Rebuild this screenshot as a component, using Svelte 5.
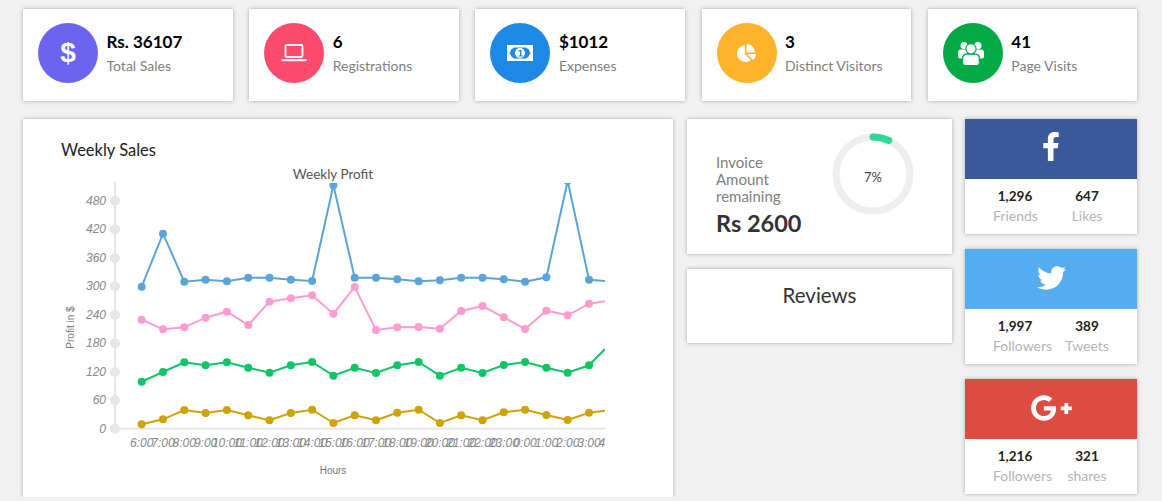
<script>
    const stats = [
        { value: "Rs. 36107", label: "Total Sales", color: "#6c63ef", icon: "dollar" },
        { value: "6", label: "Registrations", color: "#fc4b6c", icon: "laptop" },
        { value: "$1012", label: "Expenses", color: "#1e88e5", icon: "money" },
        { value: "3", label: "Distinct Visitors", color: "#ffb22b", icon: "pie" },
        { value: "41", label: "Page Visits", color: "#03a945", icon: "users" },
    ];

    const socials = [
        { name: "facebook", color: "#3b5998", a: "1,296", aLabel: "Friends", b: "647", bLabel: "Likes" },
        { name: "twitter", color: "#55acee", a: "1,997", aLabel: "Followers", b: "389", bLabel: "Tweets" },
        { name: "google", color: "#dd4c40", a: "1,216", aLabel: "Followers", b: "321", bLabel: "shares" },
    ];

    // chart numbers are pixel rows read off the plot, one per hour
    const firstX = 141.7;
    const stepX = 21.3;
    const endX = 605;
    const series = [
        { color: "#5ba4da", end: 281, ys: [286.7, 233.7, 281.7, 279.7, 281.3, 277.7, 277.7, 279.7, 281, 185.3, 277.7, 277.7, 279.3, 281.3, 280.3, 277.7, 277.7, 279.3, 281.7, 277.3, 181, 279.7] },
        { color: "#ff9ccf", end: 301.3, ys: [319.7, 329.3, 327.3, 317.7, 311.7, 325, 301.7, 298.3, 295.3, 313.7, 287, 330, 327.3, 327, 328.7, 311, 306, 317.3, 329, 310.7, 315.3, 303.7] },
        { color: "#0cc665", end: 349, ys: [381.7, 372, 362.3, 365.3, 362.3, 367.7, 372.7, 365.3, 362, 375.7, 367.7, 373, 365.3, 362, 375.7, 367.7, 373, 365, 362, 367.7, 372.7, 365.3] },
        { color: "#cfa206", end: 410.7, ys: [424.3, 419.3, 410, 413, 410, 415.3, 420.3, 413, 409.7, 423, 415.3, 420.3, 412.7, 409.7, 423, 415.3, 420.3, 412.3, 409.7, 415, 420, 412.7] },
    ];

    const yTicks = [
        [480, 200.7], [420, 229.3], [360, 258], [300, 286.3], [240, 315],
        [180, 343.3], [120, 372], [60, 400.3], [0, 428.7],
    ];

    const hours = [6, 7, 8, 9, 10, 11, 12, 13, 14, 15, 16, 17, 18, 19, 20, 21, 22, 23, 0, 1, 2, 3, 4];

    const xOf = (i) => firstX + i * stepX;
    const line = (s) =>
        s.ys.map((y, i) => `${xOf(i)},${y}`).join(" ") + ` ${endX},${s.end}`;

    // 7% of the ring
    const ringLen = 2 * Math.PI * 37;
</script>

<div class="page">
    <div class="stats">
        {#each stats as s}
            <div class="card stat">
                <div class="bubble" style="background:{s.color}">
                    {#if s.icon === "dollar"}
                        <span class="dollar">$</span>
                    {:else if s.icon === "laptop"}
                        <svg width="26" height="18" viewBox="0 0 26 18">
                            <rect x="4.5" y="1" width="17" height="12" rx="1.5" fill="none" stroke="#fff" stroke-width="1.8" />
                            <path d="M0.5 15h25v1.2a1 1 0 0 1-1 1h-23a1 1 0 0 1-1-1z" fill="#fff" />
                        </svg>
                    {:else if s.icon === "money"}
                        <svg width="26" height="16" viewBox="0 0 26 16">
                            <rect width="26" height="16" fill="#fff" />
                            <path d="M2.5 8Q4.5 3.6 7 2.6H19Q21.5 3.6 23.5 8Q21.5 12.4 19 13.4H7Q4.5 12.4 2.5 8z" fill="#1e88e5" />
                            <circle cx="13" cy="8" r="5" fill="#fff" />
                            <path d="M11.4 5.6l2-.9h1v5.7h1.2v1.1h-4v-1.1h1.4V6.2l-1.4.5z" fill="#1e88e5" />
                        </svg>
                    {:else if s.icon === "pie"}
                        <svg width="19" height="18" viewBox="0 0 544 512">
                            <path fill="#fff" d="M527.79 288H290.5l158.03 158.03c6.04 6.04 15.98 6.53 22.19.68 38.7-36.46 65.32-85.61 73.13-140.86 1.34-9.46-6.51-17.85-16.06-17.85zm-15.83-64.8C503.72 103.74 408.26 8.28 288.8.04 279.68-.59 272 7.1 272 16.24V240h223.77c9.14 0 16.82-7.68 16.19-16.8zM224 288V50.71c0-9.55-8.39-17.4-17.84-16.06C86.99 51.49-4.1 155.6.14 280.37 4.5 408.51 114.83 513.59 243.03 511.98c50.4-.63 96.97-16.87 135.26-44.03 7.9-5.6 8.42-17.23 1.57-24.08L224 288z" />
                        </svg>
                    {:else}
                        <svg class="people" width="26" height="23" viewBox="0 0 26 23">
                            <g fill="#fff">
                                <circle cx="6" cy="3.6" r="3.5" />
                                <circle cx="20" cy="3.6" r="3.5" />
                                <path d="M0 10.5a3 3 0 0 1 3-3h6v9H2a2 2 0 0 1-2-2zM26 10.5a3 3 0 0 0-3-3h-6v9h7a2 2 0 0 0 2-2z" />
                            </g>
                            <circle cx="13" cy="6.8" r="5.6" fill="#03a945" />
                            <path d="M4 16a5 4 0 0 1 5-4.5h8a5 4 0 0 1 5 4.5v7H4z" fill="#03a945" />
                            <circle cx="13" cy="6.8" r="4.5" fill="#fff" />
                            <path d="M5.2 16.5a4 3.5 0 0 1 4-3.8h7.6a4 3.5 0 0 1 4 3.8v4.5a2 2 0 0 1-2 2H7.2a2 2 0 0 1-2-2z" fill="#fff" />
                        </svg>
                    {/if}
                </div>
                <div class="stat-text">
                    <div class="stat-value">{s.value}</div>
                    <div class="stat-label">{s.label}</div>
                </div>
            </div>
        {/each}
    </div>

    <div class="main">
        <div class="card chart">
            <h4>Weekly Sales</h4>
            <svg class="plot" width="650" height="337" viewBox="23 160 650 337">
                <defs>
                    <clipPath id="plot-area"><rect x="115" y="183" width="490" height="260" /></clipPath>
                    <clipPath id="x-labels"><rect x="100" y="430" width="505" height="30" /></clipPath>
                </defs>
                <text class="chart-title" x="333" y="179">Weekly Profit</text>

                <line class="axis" x1="115" y1="182" x2="115" y2="429" />
                <line class="axis" x1="115" y1="428.7" x2="605" y2="428.7" />
                {#each yTicks as [label, y]}
                    <circle cx="115" cy={y} r="5" fill="#e6e6e6" />
                    <text class="tick" x="106" y={y + 4} text-anchor="end">{label}</text>
                {/each}
                <g clip-path="url(#x-labels)">
                    {#each hours as h, i}
                        <text class="tick" x={xOf(i)} y="447" text-anchor="middle">{h}:00</text>
                    {/each}
                </g>
                <text class="axis-name" transform="translate(74 327.5) rotate(-90)" text-anchor="middle">Profit in $</text>
                <text class="axis-name" x="333" y="474" text-anchor="middle">Hours</text>

                <g clip-path="url(#plot-area)">
                    {#each series as s}
                        <polyline points={line(s)} fill="none" stroke={s.color} stroke-width="2" />
                        {#each s.ys as y, i}
                            <circle cx={xOf(i)} cy={y} r="4" fill={s.color} />
                        {/each}
                    {/each}
                </g>
            </svg>
        </div>

        <div class="middle">
            <div class="card invoice">
                <div class="invoice-text">
                    <div class="invoice-label">Invoice<br />Amount<br />remaining</div>
                    <div class="invoice-amount">Rs 2600</div>
                </div>
                <div class="ring">
                    <svg width="82" height="82" viewBox="0 0 82 82">
                        <circle cx="41" cy="41" r="37" fill="none" stroke="#eeeeee" stroke-width="7" />
                        <circle
                            cx="41"
                            cy="41"
                            r="37"
                            fill="none"
                            stroke="#2ed896"
                            stroke-width="7"
                            stroke-linecap="round"
                            stroke-dasharray="{ringLen * 0.07} {ringLen}"
                            transform="rotate(-90 41 41)"
                        />
                    </svg>
                    <span class="ring-value">7%</span>
                </div>
            </div>
            <div class="card reviews">Reviews</div>
        </div>

        <div class="side">
            {#each socials as s}
                <div class="card social">
                    <div class="social-head" style="background:{s.color}">
                        {#if s.name === "facebook"}
                            <svg class="fb" width="18" height="29" viewBox="0 0 320 512">
                                <path fill="#fff" d="M279.14 288l14.22-92.66h-88.91v-60.13c0-25.35 12.42-50.06 52.24-50.06h40.42V6.26S260.43 0 225.36 0c-73.22 0-121.08 44.38-121.08 124.72v70.62H22.89V288h81.39v224h100.17V288z" />
                            </svg>
                        {:else if s.name === "twitter"}
                            <svg width="29" height="24" viewBox="0 0 512 416" class="bird">
                                <path fill="#fff" transform="translate(0 -48)" d="M459.37 151.716c.325 4.548.325 9.097.325 13.645 0 138.72-105.583 298.558-298.558 298.558-59.452 0-114.68-17.219-161.137-47.106 8.447.974 16.568 1.299 25.34 1.299 49.055 0 94.213-16.568 130.274-44.832-46.132-.975-84.792-31.188-98.112-72.772 6.498.974 12.995 1.624 19.818 1.624 9.421 0 18.843-1.3 27.614-3.573-48.081-9.747-84.143-51.98-84.143-102.985v-1.299c13.969 7.797 30.214 12.67 47.431 13.319-28.264-18.843-46.781-51.005-46.781-87.391 0-19.492 5.197-37.36 14.294-52.954 51.655 63.675 129.3 105.258 216.365 109.807-1.624-7.797-2.599-15.918-2.599-24.04 0-57.828 46.782-104.934 104.934-104.934 30.213 0 57.502 12.67 76.67 33.137 23.715-4.548 46.456-13.32 66.599-25.34-7.798 24.366-24.366 44.833-46.132 57.827 21.117-2.273 41.584-8.122 60.426-16.243-14.292 20.791-32.161 39.308-52.628 54.253z" />
                            </svg>
                        {:else}
                            <svg class="gplus" width="43" height="34" viewBox="0 0 640 512">
                                <path fill="#fff" d="M386.061 228.496c1.834 9.692 3.143 19.384 3.143 31.956C389.204 370.205 315.599 448 204.8 448c-106.084 0-192-85.915-192-192s85.916-192 192-192c51.864 0 95.083 18.859 128.611 50.292l-52.126 50.03c-14.145-13.621-39.028-29.599-76.485-29.599-65.484 0-118.92 54.221-118.92 121.277 0 67.056 53.436 121.277 118.92 121.277 75.961 0 104.513-54.745 108.965-82.773H204.8v-66.009h181.261zm185.406 6.437V179.2h-56.001v55.733h-55.733v56.001h55.733v55.733h56.001v-55.733H627.2v-56.001h-55.733z" />
                            </svg>
                        {/if}
                    </div>
                    <div class="social-body">
                        <div class="col first">
                            <b>{s.a}</b>
                            <span>{s.aLabel}</span>
                        </div>
                        <div class="col">
                            <b>{s.b}</b>
                            <span>{s.bLabel}</span>
                        </div>
                    </div>
                </div>
            {/each}
        </div>
    </div>
</div>

<style>
    :global(body) {
        background: #f1f1f1;
        font-family: "Lato", "Liberation Sans", sans-serif;
    }
    .page {
        padding: 9px 24.6px 0 23px;
    }
    .card {
        background: #fff;
        box-shadow: 0 0 4px rgba(0, 0, 0, 0.3);
    }
    .stats {
        display: grid;
        grid-template-columns: repeat(5, 1fr);
        gap: 16.6px;
    }
    .stat {
        height: 92px;
        display: flex;
        padding: 14px 15px;
        gap: 8.5px;
        box-sizing: border-box;
    }
    .bubble {
        width: 60px;
        height: 60px;
        border-radius: 50%;
        flex: none;
        display: flex;
        align-items: center;
        justify-content: center;
    }
    .dollar {
        color: #fff;
        font-family: "Liberation Sans", sans-serif;
        font-weight: 700;
        font-size: 28px;
        line-height: 1;
    }
    .people {
        margin-right: 3px;
    }
    .stat-text {
        padding-top: 8px;
    }
    .stat-value {
        font-size: 17px;
        line-height: 21px;
        font-weight: 700;
        color: #000;
    }
    .stat-label {
        margin-top: 5px;
        font-size: 14px;
        line-height: 18px;
        color: #808080;
    }
    .main {
        display: flex;
        align-items: flex-start;
        margin-top: 18px;
    }
    .chart {
        width: 650px;
        height: 378px;
        flex: none;
    }
    h4 {
        margin: 0;
        padding: 21px 38px 0;
        height: 20px;
        font-size: 16.5px;
        line-height: 20px;
        font-weight: 400;
        color: #222;
    }
    .plot {
        display: block;
    }
    .chart-title {
        font-size: 13.5px;
        fill: #555;
        text-anchor: middle;
    }
    .axis {
        stroke: #e6e6e6;
        stroke-width: 2;
    }
    .tick {
        font-family: "Liberation Sans", sans-serif;
        font-style: italic;
        font-size: 12px;
        fill: #888;
    }
    .axis-name {
        font-family: "Liberation Sans", sans-serif;
        font-size: 10px;
        fill: #777;
    }
    .middle {
        width: 265px;
        flex: none;
        margin-left: 14px;
        display: flex;
        flex-direction: column;
        gap: 15px;
    }
    .invoice {
        height: 135px;
        display: flex;
        box-sizing: border-box;
        padding: 14px 0 0 29px;
    }
    .invoice-text {
        width: 116px;
        padding-top: 21px;
    }
    .invoice-label {
        font-size: 15px;
        line-height: 17px;
        color: #808080;
    }
    .invoice-amount {
        margin-top: 3px;
        font-size: 23.5px;
        line-height: 30px;
        font-weight: 700;
        color: #333;
    }
    .ring {
        position: relative;
        width: 82px;
        height: 82px;
        flex: none;
    }
    .ring svg {
        display: block;
    }
    .ring-value {
        position: absolute;
        left: 0;
        right: 0;
        top: 35px;
        text-align: center;
        font-size: 13px;
        line-height: 18px;
        color: #444;
    }
    .reviews {
        height: 74px;
        box-sizing: border-box;
        padding-top: 13px;
        text-align: center;
        font-size: 20.5px;
        line-height: 26px;
        color: #333;
    }
    .side {
        width: 172px;
        flex: none;
        margin-left: 13px;
        display: flex;
        flex-direction: column;
        gap: 15px;
    }
    .social {
        height: 115px;
    }
    .social-head {
        height: 60px;
        display: flex;
        align-items: center;
        justify-content: center;
    }
    .fb {
        margin-bottom: 6px;
    }
    .bird {
        margin-bottom: 3px;
    }
    .gplus {
        margin-bottom: 2px;
    }
    .social-body {
        display: flex;
        padding: 8px 0 0 28px;
    }
    .col {
        display: flex;
        flex-direction: column;
        align-items: center;
        width: 44px;
        margin-left: 22px;
    }
    .col.first {
        align-items: flex-start;
        margin-left: 0;
        width: 50px;
    }
    .col b {
        font-size: 13.5px;
        line-height: 18px;
        color: #222;
    }
    .col.first b {
        width: 44px;
        text-align: center;
    }
    .col span {
        margin-top: 2px;
        font-size: 14px;
        line-height: 18px;
        color: #b5b5b5;
        white-space: nowrap;
    }
</style>
